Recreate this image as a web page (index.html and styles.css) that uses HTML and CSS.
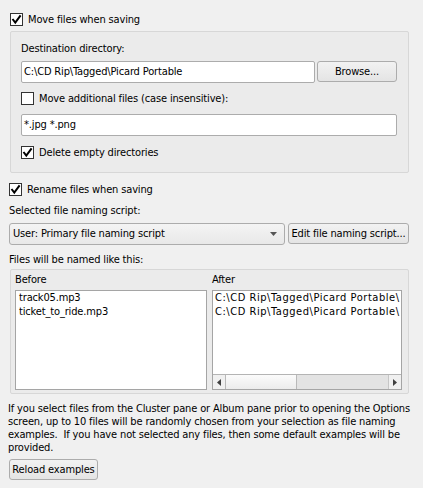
FILE: index.html
```html
<!DOCTYPE html>
<html>
<head>
<meta charset="utf-8">
<link rel="stylesheet" href="styles.css">
</head>
<body>
<div class="page">
  <div class="check top">
    <span class="box"><svg viewBox="0 0 11 11" width="11" height="11"><path d="M1.5 5 L4.3 8.6 L9.6 1.4" fill="none" stroke="#000" stroke-width="2"/></svg></span>
    <span>Move files when saving</span>
  </div>
  <div class="group">
    <div class="label">Destination directory:</div>
    <div class="row dest">
      <div class="input dir">C:\CD Rip\Tagged\Picard Portable</div>
      <div class="button browse">Browse...</div>
    </div>
    <div class="check additional">
      <span class="box"></span>
      <span>Move additional files (case insensitive):</span>
    </div>
    <div class="input patterns">*.jpg *.png</div>
    <div class="check delete">
      <span class="box"><svg viewBox="0 0 11 11" width="11" height="11"><path d="M1.5 5 L4.3 8.6 L9.6 1.4" fill="none" stroke="#000" stroke-width="2"/></svg></span>
      <span>Delete empty directories</span>
    </div>
  </div>
  <div class="check rename">
    <span class="box"><svg viewBox="0 0 11 11" width="11" height="11"><path d="M1.5 5 L4.3 8.6 L9.6 1.4" fill="none" stroke="#000" stroke-width="2"/></svg></span>
    <span>Rename files when saving</span>
  </div>
  <div class="label script-label">Selected file naming script:</div>
  <div class="row script-row">
    <div class="combo">
      <span class="combo-text">User: Primary file naming script</span>
      <svg class="combo-arrow" viewBox="0 0 7 4" width="7" height="4"><path d="M0 0 L7 0 L3.5 4 Z" fill="#555"/></svg>
    </div>
    <div class="button edit">Edit file naming script...</div>
  </div>
  <div class="label named-label">Files will be named like this:</div>
  <div class="panel">
    <div class="col before">
      <div class="colhead">Before</div>
      <div class="list">
        <div class="items">
          <div class="item">track05.mp3</div>
          <div class="item">ticket_to_ride.mp3</div>
        </div>
      </div>
    </div>
    <div class="col after">
      <div class="colhead">After</div>
      <div class="list">
        <div class="items">
          <div class="item">C:\CD Rip\Tagged\Picard Portable\</div>
          <div class="item">C:\CD Rip\Tagged\Picard Portable\</div>
        </div>
        <div class="hscroll">
          <div class="sbtn left"><svg viewBox="0 0 4 7" width="4" height="7"><path d="M4 0 L4 7 L0 3.5 Z" fill="#404040"/></svg></div>
          <div class="handle"></div>
          <div class="track"></div>
          <div class="sbtn right"><svg viewBox="0 0 4 7" width="4" height="7"><path d="M0 0 L0 7 L4 3.5 Z" fill="#404040"/></svg></div>
        </div>
      </div>
    </div>
  </div>
  <p class="note">If you select files from the Cluster pane or Album pane prior to opening the Options<br>screen, up to 10 files will be randomly chosen from your selection as file naming<br>examples.&nbsp; If you have not selected any files, then some default examples will be<br>provided.</p>
  <div class="button reload">Reload examples</div>
</div>
</body>
</html>
```
FILE: styles.css
```css
* { box-sizing: border-box; }
html, body { margin: 0; padding: 0; }
body {
  background: #f0f0f0;
  font-family: "DejaVu Sans Condensed", "DejaVu Sans", sans-serif;
  font-stretch: condensed;
  font-size: 11px;
  letter-spacing: -0.15px;
  color: #000;
  width: 423px;
  height: 488px;
  overflow: hidden;
}
.page {
  padding: 12px 14px 0 9px;
  display: flex;
  flex-direction: column;
  align-items: flex-start;
}
.check {
  display: flex;
  align-items: center;
  height: 15px;
  gap: 5px;
  line-height: 13px;
  white-space: nowrap;
}
.box {
  width: 13px;
  height: 13px;
  border: 1px solid #333;
  background: #fff;
  flex: none;
  display: flex;
}
.box svg { display: block; }
.check.top { margin-left: 1px; }
.label { line-height: 13px; height: 13px; white-space: nowrap; }
.group {
  margin-top: 4px;
  margin-left: 1px;
  width: 399px;
  border: 1px solid #d7d7d7;
  border-radius: 2px;
  background: #ebebeb;
  padding: 10px 11px 12px 10px;
  display: flex;
  flex-direction: column;
}
.row { display: flex; align-items: flex-start; }
.dest { margin-top: 6px; gap: 2px; }
.input {
  height: 22px;
  border: 1px solid #acacac;
  border-radius: 2px;
  background: #fff;
  line-height: 20px;
  padding-left: 2px;
  white-space: nowrap;
  overflow: hidden;
}
.dir { width: 294px; }
.button {
  height: 21px;
  border: 1px solid #acacac;
  border-radius: 3px;
  background: linear-gradient(#f2f2f2, #e4e4e4);
  line-height: 19px;
  text-align: center;
  white-space: nowrap;
  overflow: hidden;
}
.browse { width: 80px; }
.additional { margin-top: 8px; }
.patterns { margin-top: 8px; width: 100%; }
.delete { margin-top: 9px; }
.rename { margin-top: 9px; }
.script-label { margin-top: 7px; }
.script-row { margin-top: 6px; gap: 3px; width: 400px; }
.combo {
  width: 276px;
  height: 22px;
  border: 1px solid #acacac;
  border-radius: 3px;
  background: linear-gradient(#f4f4f4, #e8e8e8);
  display: flex;
  align-items: center;
  justify-content: space-between;
  padding: 0 7px 0 3px;
  line-height: 20px;
  white-space: nowrap;
}
.combo-arrow { display: block; }
.edit { width: 121px; }
.named-label { margin-top: 8px; }
.panel {
  margin-top: 3px;
  margin-left: 1px;
  width: 399px;
  border: 1px solid #d7d7d7;
  border-radius: 2px;
  background: #ebebeb;
  padding: 3px 6px 3px 4px;
  display: flex;
  gap: 5px;
}
.col { display: flex; flex-direction: column; }
.before { width: 192px; }
.after { width: 190px; }
.colhead { line-height: 13px; height: 13px; white-space: nowrap; }
.list {
  margin-top: 4px;
  height: 100px;
  border: 1px solid #a5a5a5;
  background: #fff;
  display: flex;
  flex-direction: column;
  overflow: hidden;
}
.items { flex: 1; line-height: 14px; white-space: nowrap; overflow: hidden; }
.before .items { padding-left: 3px; }
.after .items { padding-left: 2px; letter-spacing: 0.55px; }
.hscroll {
  height: 15px;
  border-top: 1px solid #b4b4b4;
  display: flex;
  flex: none;
}
.sbtn {
  width: 13px;
  background: #f0f0f0;
  display: flex;
  align-items: center;
  justify-content: center;
}
.sbtn.left { border-right: 1px solid #b9b9b9; }
.sbtn.right { border-left: 1px solid #c6c6c6; }
.handle {
  width: 71px;
  background: linear-gradient(#fbfbfb, #ececec);
  border-right: 1px solid #b9b9b9;
}
.track { flex: 1; background: #e3e3e3; }
.note {
  margin: 8px 0 0 -1px;
  line-height: 13px;
  white-space: nowrap;
}
.reload { margin-top: 5px; width: 89px; }
```
